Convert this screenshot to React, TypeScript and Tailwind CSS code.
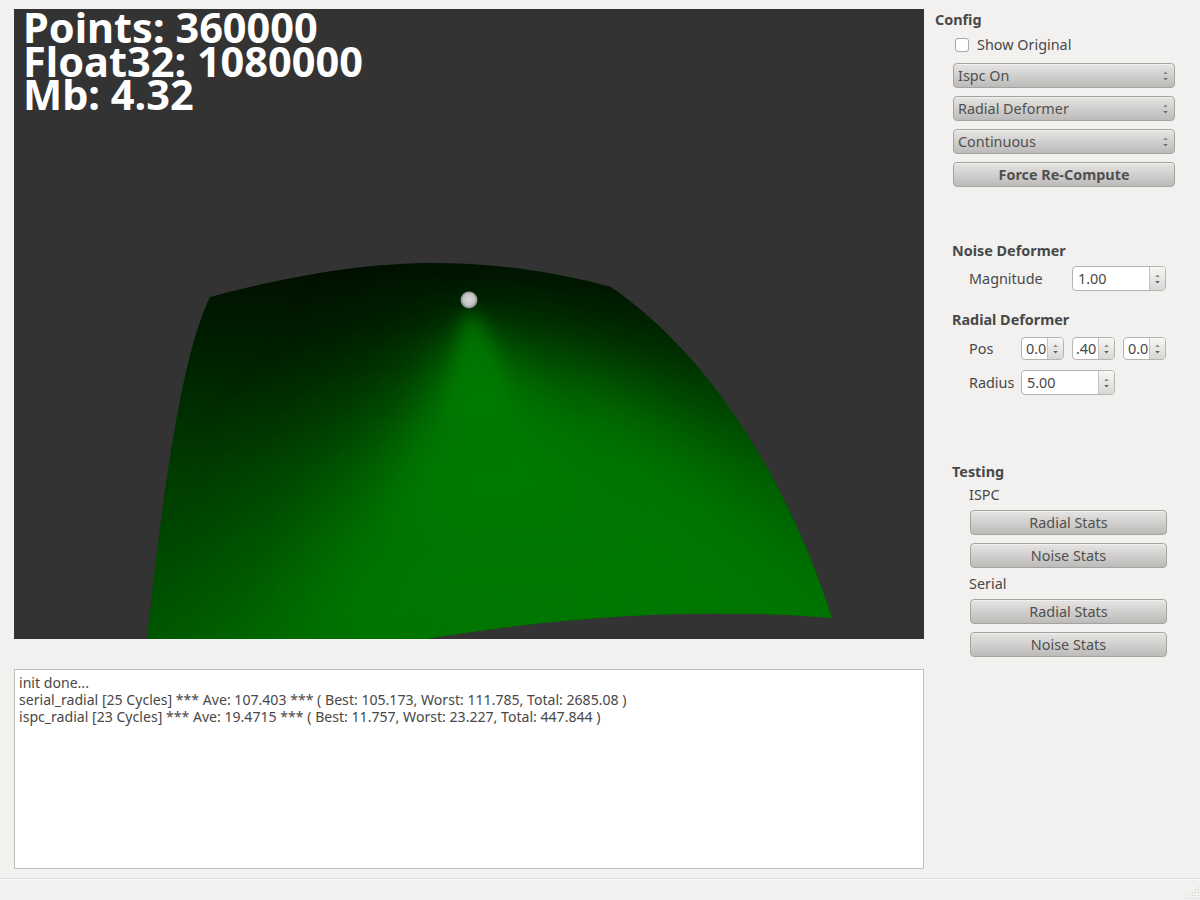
const font = { fontFamily: '"Noto Sans", "Open Sans", sans-serif' };

function Arrows({ small = false }: { small?: boolean }) {
  return (
    <svg width="7" height="14" viewBox="0 0 7 14" className="shrink-0">
      <path d="M3.5 2.5 L5.8 5 H1.2 Z" fill={small ? "#8a8a86" : "#8a8a88"} />
      <path d="M3.5 11.5 L5.8 9 H1.2 Z" fill={small ? "#5f5f5c" : "#6e6e6c"} />
    </svg>
  );
}

function Select({ label }: { label: string }) {
  return (
    <div className="h-[25px] w-[222px] rounded-[4px] border border-[#a3a3a0] bg-gradient-to-b from-[#e6e5e3] to-[#bcbbb9] flex items-center justify-between pl-[4px] pr-[5px] text-[14.4px] text-[#505050] shadow-[inset_0_1px_0_#f2f1f0]">
      <span>{label}</span>
      <Arrows />
    </div>
  );
}

function Button({ label, bold = false, w = "w-[222px]" }: { label: string; bold?: boolean; w?: string }) {
  return (
    <div className={`h-[25px] ${w} rounded-[4px] border border-[#a3a3a0] bg-gradient-to-b from-[#e6e5e3] to-[#bcbbb9] flex items-center justify-center text-[14.4px] text-[#505050] shadow-[inset_0_1px_0_#f2f1f0] ${bold ? "font-bold" : ""}`}>
      {label}
    </div>
  );
}

function Spin({ value, w, pad = "pl-[5px]" }: { value: string; w: string; pad?: string }) {
  return (
    <div className={`${w} rounded-[4px] border border-[#b5b4b1] flex overflow-hidden bg-white text-[14.4px] text-[#484848]`}>
      <div className={`flex-1 min-w-0 overflow-hidden flex items-center whitespace-nowrap ${pad}`}>{value}</div>
      <div className="w-[16px] shrink-0 border-l border-[#c4c3c0] bg-gradient-to-b from-[#f8f7f6] to-[#d8d7d5] flex items-center justify-center">
        <Arrows small />
      </div>
    </div>
  );
}

function Surface() {
  const d = "M196 288 C 270 268 350 254 416 254 C 480 254 540 262 597 278 C 680 335 765 445 818 609 C 700 599 560 605 412 630 L 133 630 C 146 510 165 350 196 288 Z";
  return (
    <svg className="block" width="910" height="630" viewBox="0 0 910 630">
      <defs>
        <clipPath id="clip"><path d={d} /></clipPath>
        <linearGradient id="base" gradientUnits="userSpaceOnUse" x1="0" y1="254" x2="0" y2="630">
          <stop offset="0" stopColor="#000f00" />
          <stop offset="0.22" stopColor="#001f00" />
          <stop offset="0.55" stopColor="#003c00" />
          <stop offset="1" stopColor="#005400" />
        </linearGradient>
        <filter id="b0" filterUnits="userSpaceOnUse" x="0" y="0" width="910" height="900"><feGaussianBlur stdDeviation="8" /></filter>
        <filter id="b1" filterUnits="userSpaceOnUse" x="0" y="0" width="910" height="900"><feGaussianBlur stdDeviation="20" /></filter>
        <filter id="b2" filterUnits="userSpaceOnUse" x="-200" y="0" width="1300" height="1000"><feGaussianBlur stdDeviation="40" /></filter>
        <filter id="b3" filterUnits="userSpaceOnUse" x="-400" y="0" width="1700" height="1200"><feGaussianBlur stdDeviation="70" /></filter>
        <radialGradient id="ball" cx="0.5" cy="0.48" r="0.52">
          <stop offset="0" stopColor="#d8d8d8" />
          <stop offset="0.65" stopColor="#c4c4c4" />
          <stop offset="1" stopColor="#7c7c7c" />
        </radialGradient>
      </defs>
      <rect width="910" height="630" fill="#333333" />
      <g clipPath="url(#clip)">
        <rect width="910" height="630" fill="url(#base)" />
        <polygon points="440,340 110,800 1150,800 780,440" fill="#007800" opacity="0.85" filter="url(#b3)" />
        <polygon points="400,400 160,640 420,700" fill="#006c00" opacity="0.45" filter="url(#b3)" />
        <polygon points="455,340 280,640 860,660 620,400" fill="#007a00" opacity="0.75" filter="url(#b2)" />
        <polygon points="446,325 472,325 580,510 380,510" fill="#007a00" opacity="0.8" filter="url(#b1)" />
        <polygon points="450,306 464,306 482,345 500,410 430,410" fill="#007c00" opacity="0.7" filter="url(#b0)" />
      </g>
      <circle cx="455" cy="291" r="8.5" fill="url(#ball)" />
    </svg>
  );
}

export default function App() {
  return (
    <div className="w-[1200px] h-[900px] bg-[#f2f1f0] flex flex-col overflow-hidden" style={font}>
      <div className="flex h-[878px]">
        <div className="w-[924px] pl-[14px] pt-[9px] flex flex-col shrink-0">
          <div className="relative w-[910px] h-[630px]">
            <Surface />
            <div className="absolute left-[9px] top-[2px] text-white font-bold text-[41.5px] leading-[33.5px]">
              <div>Points: 360000</div>
              <div>Float32: 1080000</div>
              <div>Mb: 4.32</div>
            </div>
          </div>
          <div className="mt-[30px] w-[910px] h-[200px] bg-white border border-[#bfbfbc] px-[4px] pt-[4px] text-[14.1px] leading-[17px] text-[#484848] whitespace-nowrap">
            <div>init done...</div>
            <div>serial_radial [25 Cycles] *** Ave: 107.403 *** ( Best: 105.173, Worst: 111.785, Total: 2685.08 )</div>
            <div>ispc_radial [23 Cycles] *** Ave: 19.4715 *** ( Best: 11.757, Worst: 23.227, Total: 447.844 )</div>
          </div>
        </div>
        <div className="flex-1 pl-[11px] pt-[10px] text-[14.4px] text-[#484848]">
          <div className="font-bold leading-[20px]">Config</div>
          <div className="pl-[18px]">
            <div className="mt-[5px] h-[20px] flex items-center pl-[2px]">
              <div className="w-[14px] h-[14px] rounded-[3px] border border-[#a8a7a4] bg-white" />
              <span className="ml-[8px]">Show Original</span>
            </div>
            <div className="mt-[8px] flex flex-col gap-[8px]">
              <Select label="Ispc On" />
              <Select label="Radial Deformer" />
              <Select label="Continuous" />
              <Button label="Force Re-Compute" bold />
            </div>
          </div>
          <div className="mt-[54px] pl-[17px]">
            <div className="font-bold leading-[20px]">Noise Deformer</div>
            <div className="mt-[5px] pl-[17px] flex items-center h-[25px]">
              <span className="w-[103px]">Magnitude</span>
              <Spin value="1.00" w="w-[94px] h-[25px]" />
            </div>
            <div className="mt-[19px] font-bold leading-[20px]">Radial Deformer</div>
            <div className="mt-[7px] pl-[17px] flex items-center h-[23px]">
              <span className="w-[52px]">Pos</span>
              <div className="flex gap-[8px]">
                <Spin value="0.0" w="w-[43px] h-[23px]" pad="pl-[4px]" />
                <Spin value=".40" w="w-[43px] h-[23px]" pad="pl-[3px]" />
                <Spin value="0.0" w="w-[43px] h-[23px]" pad="pl-[4px]" />
              </div>
            </div>
            <div className="mt-[10px] pl-[17px] flex items-center h-[25px]">
              <span className="w-[52px]">Radius</span>
              <Spin value="5.00" w="w-[94px] h-[25px]" />
            </div>
            <div className="mt-[67px] font-bold leading-[20px]">Testing</div>
            <div className="pl-[17px]">
              <div className="mt-[3px] leading-[20px]">ISPC</div>
              <div className="mt-[5px] pl-[1px] flex flex-col gap-[8px]">
                <Button label="Radial Stats" w="w-[197px]" />
                <Button label="Noise Stats" w="w-[197px]" />
              </div>
              <div className="mt-[6px] leading-[20px]">Serial</div>
              <div className="mt-[5px] pl-[1px] flex flex-col gap-[8px]">
                <Button label="Radial Stats" w="w-[197px]" />
                <Button label="Noise Stats" w="w-[197px]" />
              </div>
            </div>
          </div>
        </div>
      </div>
      <div className="relative flex-1 border-t border-[#dedddb] shadow-[inset_0_1px_0_#f8f8f7]">
        <svg className="absolute right-[1px] bottom-[1px]" width="13" height="13" viewBox="0 0 13 13">
          {[[12,0],[9,3],[12,3],[6,6],[9,6],[12,6],[3,9],[6,9],[9,9],[12,9],[0,12],[3,12],[6,12],[9,12],[12,12]].map(([x,y],i)=>(
            <rect key={i} x={x} y={y} width="1" height="1" fill="#cfcdca" />
          ))}
        </svg>
      </div>
    </div>
  );
}
